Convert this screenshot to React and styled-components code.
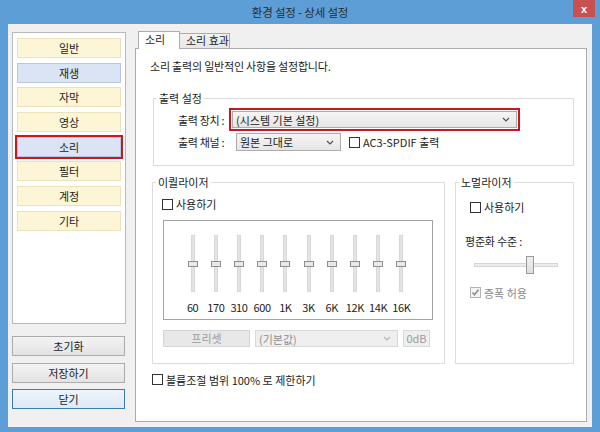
import styled, { createGlobalStyle } from "styled-components";

const GlobalStyle = createGlobalStyle`
  html, body {
    margin: 0;
    padding: 0;
    background: #ffffff;
  }
  body {
    font-family: "Noto Sans CJK KR", "Noto Sans", sans-serif;
    font-size: 11px;
    color: #1c1c1c;
  }
`;

const menu = [
  { label: "일반", tone: "yellow" },
  { label: "재생", tone: "blue" },
  { label: "자막", tone: "yellow" },
  { label: "영상", tone: "yellow" },
  { label: "소리", tone: "blue", selected: true },
  { label: "필터", tone: "yellow" },
  { label: "계정", tone: "yellow" },
  { label: "기타", tone: "yellow" },
];

const bands = ["60", "170", "310", "600", "1K", "3K", "6K", "12K", "14K", "16K"];

function Chevron({ faded }) {
  return (
    <svg width="8" height="5" viewBox="0 0 8 5">
      <path
        d="M1 1 L4 4 L7 1"
        fill="none"
        stroke={faded ? "#b4b4b4" : "#505050"}
        strokeWidth="1.2"
      />
    </svg>
  );
}

function Check({ label, checked, disabled }) {
  return (
    <CheckRow $disabled={disabled}>
      <CheckBox $disabled={disabled}>
        {checked && (
          <svg width="9" height="9" viewBox="0 0 9 9">
            <path
              d="M1.5 4.5 L3.5 6.8 L7.5 1.8"
              fill="none"
              stroke={disabled ? "#8c8c8c" : "#222"}
              strokeWidth="1.6"
            />
          </svg>
        )}
      </CheckBox>
      {label}
    </CheckRow>
  );
}

export default function App() {
  return (
    <>
      <GlobalStyle />
      <Window>
        <TitleBar>
          <Title>환경 설정 - 상세 설정</Title>
          <CloseButton>x</CloseButton>
        </TitleBar>

        <Body>
          <Sidebar>
            <NavBox>
              {menu.map((item) => (
                <NavItem key={item.label} $tone={item.tone} $selected={item.selected}>
                  {item.label}
                </NavItem>
              ))}
            </NavBox>
            <SideButtons>
              <SideButton>초기화</SideButton>
              <SideButton>저장하기</SideButton>
              <SideButton $primary>닫기</SideButton>
            </SideButtons>
          </Sidebar>

          <Main>
            <TabRow>
              <Tab $active>소리</Tab>
              <Tab>소리 효과</Tab>
            </TabRow>
            <Pane>
              <Description>소리 출력의 일반적인 사항을 설정합니다.</Description>

              <OutputGroup>
                <Legend>출력 설정</Legend>
                <OutputContent>
                  <FieldRow>
                    <RowLabel>출력 장치 :</RowLabel>
                    <Highlight>
                      <Select $width={285} $height={17}>
                        <span>(시스템 기본 설정)</span>
                        <Chevron />
                      </Select>
                    </Highlight>
                  </FieldRow>
                  <FieldRow>
                    <RowLabel>출력 채널 :</RowLabel>
                    <Select $width={105} $height={18} $offset={7}>
                      <span>원본 그대로</span>
                      <Chevron />
                    </Select>
                    <Spacer $w={8} />
                    <Check label="AC3-SPDIF 출력" />
                  </FieldRow>
                </OutputContent>
              </OutputGroup>

              <GroupsRow>
                <EqGroup>
                  <Legend>이퀄라이저</Legend>
                  <EqContent>
                    <Check label="사용하기" />
                    <EqBox>
                      {bands.map((band) => (
                        <Band key={band}>
                          <VTrack>
                            <VThumb />
                          </VTrack>
                          <BandLabel>{band}</BandLabel>
                        </Band>
                      ))}
                    </EqBox>
                    <PresetRow>
                      <DisabledButton>프리셋</DisabledButton>
                      <Select $width={143} $height={17} $disabled>
                        <span>(기본값)</span>
                        <Chevron faded />
                      </Select>
                      <DbBox>0dB</DbBox>
                    </PresetRow>
                  </EqContent>
                </EqGroup>

                <NormGroup>
                  <Legend>노멀라이저</Legend>
                  <NormContent>
                    <Check label="사용하기" />
                    <LevelLabel>평준화 수준 :</LevelLabel>
                    <HSlider>
                      <HTrack />
                      <HThumb />
                    </HSlider>
                    <AmpRow>
                      <Check label="증폭 허용" checked disabled />
                    </AmpRow>
                  </NormContent>
                </NormGroup>
              </GroupsRow>

              <LimitRow>
                <Check label="볼륨조절 범위 100% 로 제한하기" />
              </LimitRow>
            </Pane>
          </Main>
        </Body>
      </Window>
    </>
  );
}

const Window = styled.div`
  width: 600px;
  height: 432px;
  box-sizing: border-box;
  background: #5e9ed7;
  display: flex;
  flex-direction: column;
  padding-bottom: 5px;
`;

const TitleBar = styled.div`
  height: 24px;
  display: grid;
  grid-template-columns: 1fr auto 1fr;
  align-items: start;
`;

const Title = styled.div`
  grid-column: 2;
  line-height: 24px;
  font-size: 11.5px;
  color: #2b2b2b;
  letter-spacing: -0.2px;
`;

const CloseButton = styled.div`
  justify-self: end;
  width: 22px;
  height: 17px;
  margin-right: 5px;
  background: #c75050;
  color: #ffffff;
  display: flex;
  align-items: center;
  justify-content: center;
  font-family: "Liberation Sans", sans-serif;
  font-size: 11px;
  font-weight: bold;
`;

const Body = styled.div`
  flex: 1;
  margin: 0 8px;
  background: #f0f0f0;
  display: flex;
  gap: 9px;
  padding: 7px 5px 5px 4px;
  min-height: 0;
`;

const Sidebar = styled.div`
  width: 114px;
  margin-top: 1px;
  display: flex;
  flex-direction: column;
`;

const NavBox = styled.div`
  height: 292px;
  box-sizing: border-box;
  background: #ffffff;
  border: 1px solid #b9b9b9;
  padding: 5px 4px;
  display: flex;
  flex-direction: column;
  gap: 4.7px;
`;

const NavItem = styled.div`
  height: 20px;
  box-sizing: border-box;
  border: 1px solid ${(p) => (p.$tone === "blue" ? "#b9c7de" : "#ebe2bb")};
  background: ${(p) => (p.$tone === "blue" ? "#dae4f4" : "#fdf6d6")};
  text-align: center;
  line-height: 18px;
  color: #222;
  outline: ${(p) => (p.$selected ? "2px solid #c8181e" : "none")};
`;

const SideButtons = styled.div`
  margin-top: 12px;
  display: flex;
  flex-direction: column;
  gap: 6.5px;
`;

const SideButton = styled.div`
  width: 113px;
  height: 20px;
  box-sizing: border-box;
  border: 1px solid ${(p) => (p.$primary ? "#3d7bad" : "#acacac")};
  background: ${(p) =>
    p.$primary
      ? "linear-gradient(#eef5fb, #dde9f5)"
      : "linear-gradient(#f3f3f3, #e3e3e3)"};
  text-align: center;
  line-height: 18px;
  color: #222;
`;

const Main = styled.div`
  flex: 1;
  display: flex;
  flex-direction: column;
  min-width: 0;
`;

const TabRow = styled.div`
  height: 17px;
  display: flex;
  align-items: flex-end;
  padding-left: 3px;
`;

const Tab = styled.div`
  position: relative;
  z-index: ${(p) => (p.$active ? 1 : 0)};
  box-sizing: border-box;
  height: ${(p) => (p.$active ? "18px" : "15px")};
  margin-bottom: ${(p) => (p.$active ? "-1px" : "0")};
  margin-left: ${(p) => (p.$active ? "0" : "-1px")};
  width: ${(p) => (p.$active ? "42px" : "51px")};
  padding-left: 6px;
  border: 1px solid #acacac;
  border-bottom: none;
  background: ${(p) => (p.$active ? "#ffffff" : "linear-gradient(#f2f2f2, #e6e6e6)")};
  line-height: ${(p) => (p.$active ? "14px" : "13px")};
  color: #1c1c1c;
`;

const Pane = styled.div`
  flex: 1;
  background: #ffffff;
  border: 1px solid #acacac;
  padding: 10px 12px 0 14px;
  display: flex;
  flex-direction: column;
`;

const Description = styled.div`
  line-height: 14px;
  letter-spacing: -0.2px;
`;

const GroupBox = styled.fieldset`
  margin: 0;
  padding: 0;
  border: 1px solid #dcdcdc;
  min-width: 0;
`;

const Legend = styled.legend`
  margin-left: 3px;
  padding: 0 2px;
  line-height: 14px;
  font-size: 11px;
  color: #1c1c1c;
`;

const OutputGroup = styled(GroupBox)`
  margin: 18px 0 0 3px;
`;

const OutputContent = styled.div`
  padding: 3px 0 14px 0;
  display: flex;
  flex-direction: column;
  gap: 2px;
`;

const FieldRow = styled.div`
  display: flex;
  align-items: center;
  padding-left: 24px;
`;

const RowLabel = styled.div`
  width: 51px;
  line-height: 14px;
  letter-spacing: -0.3px;
  white-space: nowrap;
`;

const Highlight = styled.div`
  border: 2px solid #c8181e;
  padding: 1px;
  display: flex;
`;

const Select = styled.div`
  width: ${(p) => p.$width}px;
  height: ${(p) => p.$height}px;
  margin-left: ${(p) => p.$offset || 0}px;
  box-sizing: border-box;
  border: 1px solid ${(p) => (p.$disabled ? "#d9d9d9" : "#acacac")};
  background: ${(p) => (p.$disabled ? "#efefef" : "linear-gradient(#f5f5f5, #e6e6e6)")};
  color: ${(p) => (p.$disabled ? "#8e8e8e" : "#1c1c1c")};
  display: flex;
  align-items: center;
  justify-content: space-between;
  padding: 0 6px 0 3px;
  line-height: 14px;
  white-space: nowrap;
`;

const Spacer = styled.div`
  width: ${(p) => p.$w}px;
  flex-shrink: 0;
`;

const CheckRow = styled.div`
  display: inline-flex;
  align-items: center;
  gap: 3px;
  line-height: 14px;
  white-space: nowrap;
  color: ${(p) => (p.$disabled ? "#8a8a8a" : "#1c1c1c")};
`;

const CheckBox = styled.span`
  width: 11px;
  height: 11px;
  box-sizing: border-box;
  border: 1px solid ${(p) => (p.$disabled ? "#b3b3b3" : "#333333")};
  background: ${(p) => (p.$disabled ? "#f4f4f4" : "#ffffff")};
  display: flex;
  align-items: center;
  justify-content: center;
`;

const GroupsRow = styled.div`
  display: flex;
  gap: 10px;
  margin: 9px 0 0 2px;
`;

const EqGroup = styled(GroupBox)`
  width: 293px;
  box-sizing: border-box;
`;

const EqContent = styled.div`
  padding: 8px 0 16px 9px;
  display: flex;
  flex-direction: column;
  align-items: flex-start;
`;

const EqBox = styled.div`
  margin: 9px 0 0 1px;
  width: 270px;
  height: 100px;
  box-sizing: border-box;
  border: 1px solid #a3a3a3;
  background: #ffffff;
  padding: 14px 0 0 17px;
  display: grid;
  grid-template-columns: repeat(10, 23.2px);
`;

const Band = styled.div`
  display: flex;
  flex-direction: column;
  align-items: center;
`;

const VTrack = styled.div`
  position: relative;
  width: 4px;
  height: 57px;
  box-sizing: border-box;
  background: #e4e4e4;
  border: 1px solid #d8d8d8;
`;

const VThumb = styled.div`
  position: absolute;
  left: -4px;
  top: 25px;
  width: 10px;
  height: 6px;
  box-sizing: border-box;
  border: 1px solid #8f8f8f;
  background: #e9e9e9;
`;

const BandLabel = styled.div`
  margin-top: 8px;
  line-height: 14px;
  font-size: 11px;
  letter-spacing: -0.4px;
  white-space: nowrap;
  color: #222;
`;

const PresetRow = styled.div`
  margin: 10px 0 0 1px;
  display: flex;
  gap: 5px;
`;

const DisabledButton = styled.div`
  width: 87px;
  height: 17px;
  box-sizing: border-box;
  border: 1px solid #d5d5d5;
  background: #e8e8e8;
  color: #9c9c9c;
  text-align: center;
  line-height: 15px;
`;

const DbBox = styled.div`
  width: 27px;
  height: 17px;
  box-sizing: border-box;
  border: 1px solid #d9d9d9;
  background: #efefef;
  color: #9a9a9a;
  text-align: center;
  line-height: 15px;
`;

const NormGroup = styled(GroupBox)`
  flex: 1;
`;

const NormContent = styled.div`
  padding: 11px 0 0 14px;
  display: flex;
  flex-direction: column;
  align-items: flex-start;
`;

const LevelLabel = styled.div`
  margin: 20px 0 0 -5px;
  line-height: 14px;
  letter-spacing: -0.2px;
`;

const HSlider = styled.div`
  position: relative;
  margin: 8px 0 0 4px;
  width: 84px;
  height: 18px;
  display: flex;
  align-items: center;
`;

const HTrack = styled.div`
  width: 100%;
  height: 4px;
  box-sizing: border-box;
  border: 1px solid #d6d6d6;
  background: #ececec;
`;

const HThumb = styled.div`
  position: absolute;
  left: 52px;
  top: 0;
  width: 8px;
  height: 18px;
  box-sizing: border-box;
  border: 1px solid #9a9a9a;
  background: linear-gradient(#f0f0f0, #dedede);
`;

const AmpRow = styled.div`
  margin-top: 10px;
`;

const LimitRow = styled.div`
  margin: 8px 0 0 2px;
`;
